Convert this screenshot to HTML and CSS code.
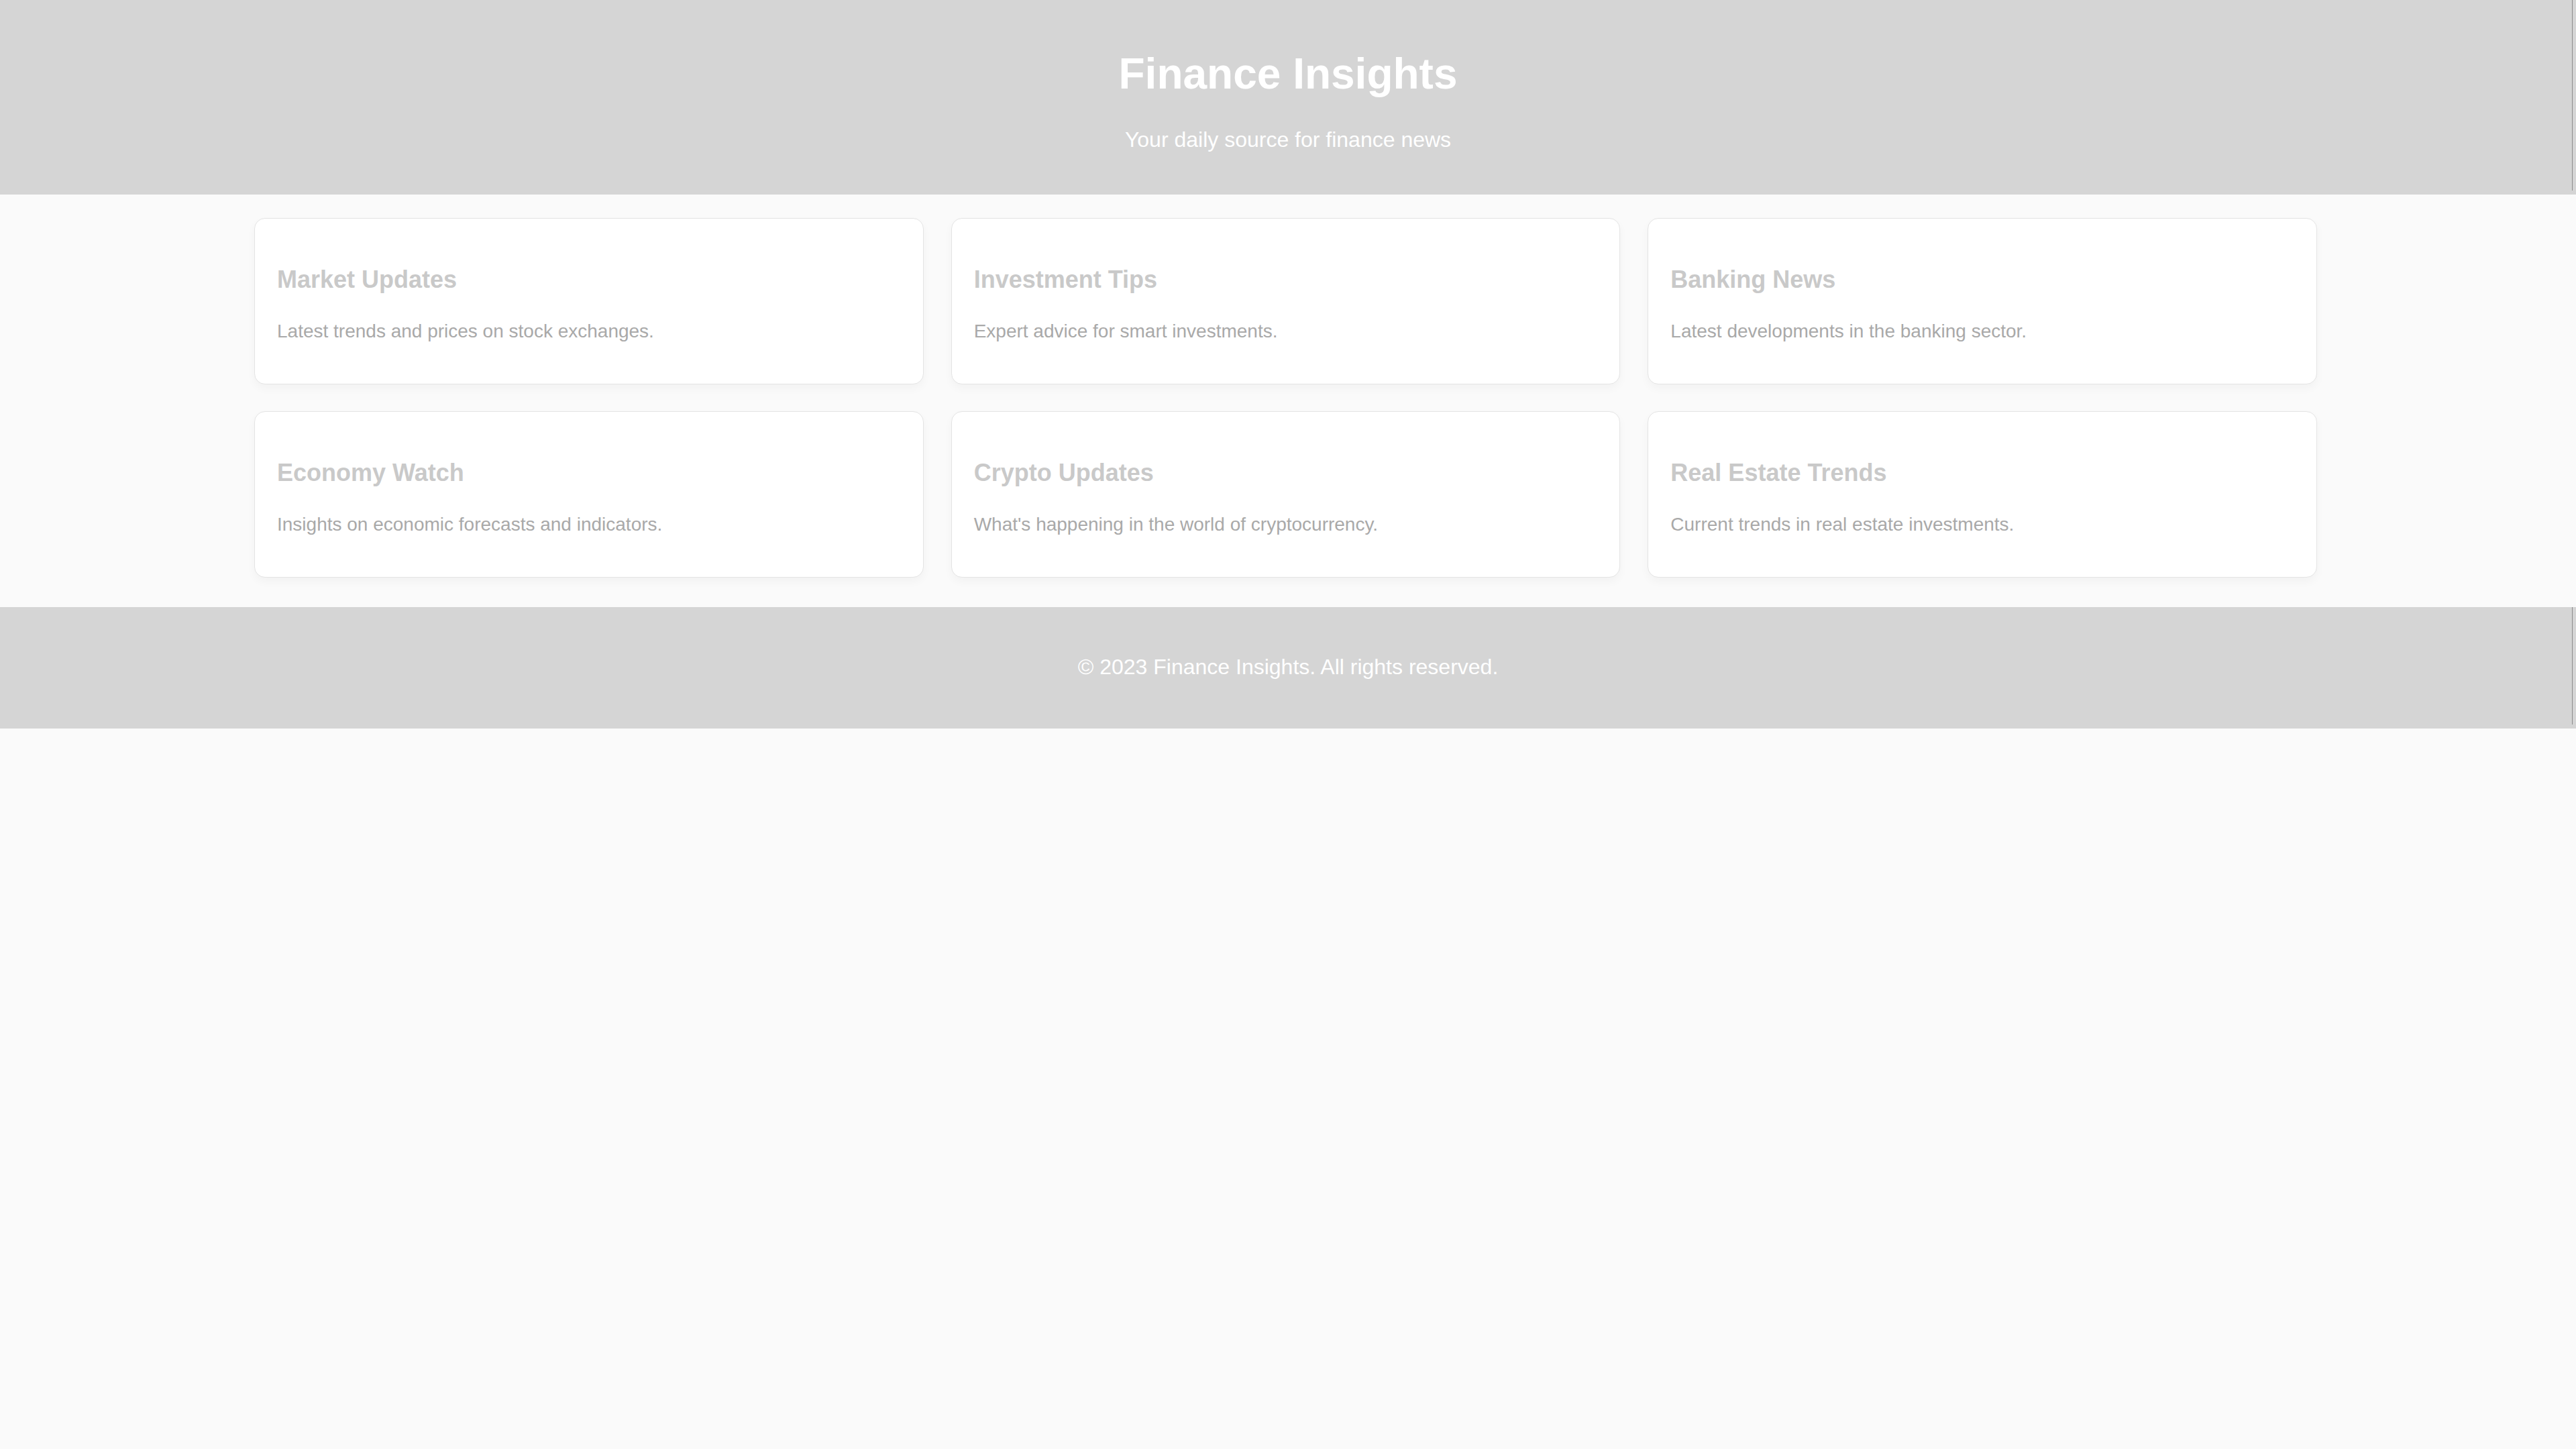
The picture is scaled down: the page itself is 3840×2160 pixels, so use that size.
FILE: index.html
```html
<!DOCTYPE html>
<html lang="en">
<head>
<meta charset="utf-8">
<title>Finance Insights</title>
<link rel="stylesheet" href="styles.css">
</head>
<body>
<header class="site-header">
  <h1 class="site-title">Finance Insights</h1>
  <p class="site-tagline">Your daily source for finance news</p>
</header>
<main class="main">
  <div class="card-grid">
    <article class="card">
      <h2 class="card-title">Market Updates</h2>
      <p class="card-text">Latest trends and prices on stock exchanges.</p>
    </article>
    <article class="card">
      <h2 class="card-title">Investment Tips</h2>
      <p class="card-text">Expert advice for smart investments.</p>
    </article>
    <article class="card">
      <h2 class="card-title">Banking News</h2>
      <p class="card-text">Latest developments in the banking sector.</p>
    </article>
    <article class="card">
      <h2 class="card-title">Economy Watch</h2>
      <p class="card-text">Insights on economic forecasts and indicators.</p>
    </article>
    <article class="card">
      <h2 class="card-title">Crypto Updates</h2>
      <p class="card-text">What's happening in the world of cryptocurrency.</p>
    </article>
    <article class="card">
      <h2 class="card-title">Real Estate Trends</h2>
      <p class="card-text">Current trends in real estate investments.</p>
    </article>
  </div>
</main>
<footer class="site-footer">
  <p class="footer-text">&copy; 2023 Finance Insights. All rights reserved.</p>
</footer>
</body>
</html>
```

FILE: styles.css
```css
html, body {
  margin: 0;
  padding: 0;
}
body {
  background: #fafafa;
  font-family: "Liberation Sans", Arial, sans-serif;
  font-size: 32px;
  color: #a8a8a8;
}
.site-header {
  position: relative;
  background: #d5d5d5;
  color: #ffffff;
  text-align: center;
  padding: 30px 0 31px;
}
.site-header::after,
.site-footer::after {
  content: "";
  position: absolute;
  top: 0;
  bottom: 6px;
  right: 5px;
  width: 1px;
  background: #8c8c8c;
}
.site-title {
  font-size: 64px;
  font-weight: bold;
  line-height: normal;
  margin: 43px 0;
}
.site-tagline {
  font-size: 32px;
  line-height: normal;
  margin: 42px 0 32px;
}
.main {
  padding: 35px 7px 44px 0;
}
.card-grid {
  width: 3075px;
  margin: 0 auto;
  display: grid;
  grid-template-columns: repeat(3, 1fr);
  column-gap: 41px;
  row-gap: 40px;
}
.card {
  background: #ffffff;
  border: 1px solid #e4e4e4;
  border-radius: 16px;
  box-shadow: 0 6px 14px rgba(0, 0, 0, 0.035);
  padding: 32px 33px;
}
.card-title {
  font-size: 36px;
  font-weight: bold;
  line-height: normal;
  color: #c9c9c9;
  margin: 38px 0 40px;
}
.card-text {
  font-size: 28px;
  line-height: normal;
  color: #a9a9a9;
  margin: 0 0 30px;
}
.site-footer {
  position: relative;
  background: #d5d5d5;
  color: #ffffff;
  text-align: center;
  padding: 40px 0;
}
.footer-text {
  font-size: 32px;
  line-height: normal;
  margin: 31px 0 33px;
}
```
